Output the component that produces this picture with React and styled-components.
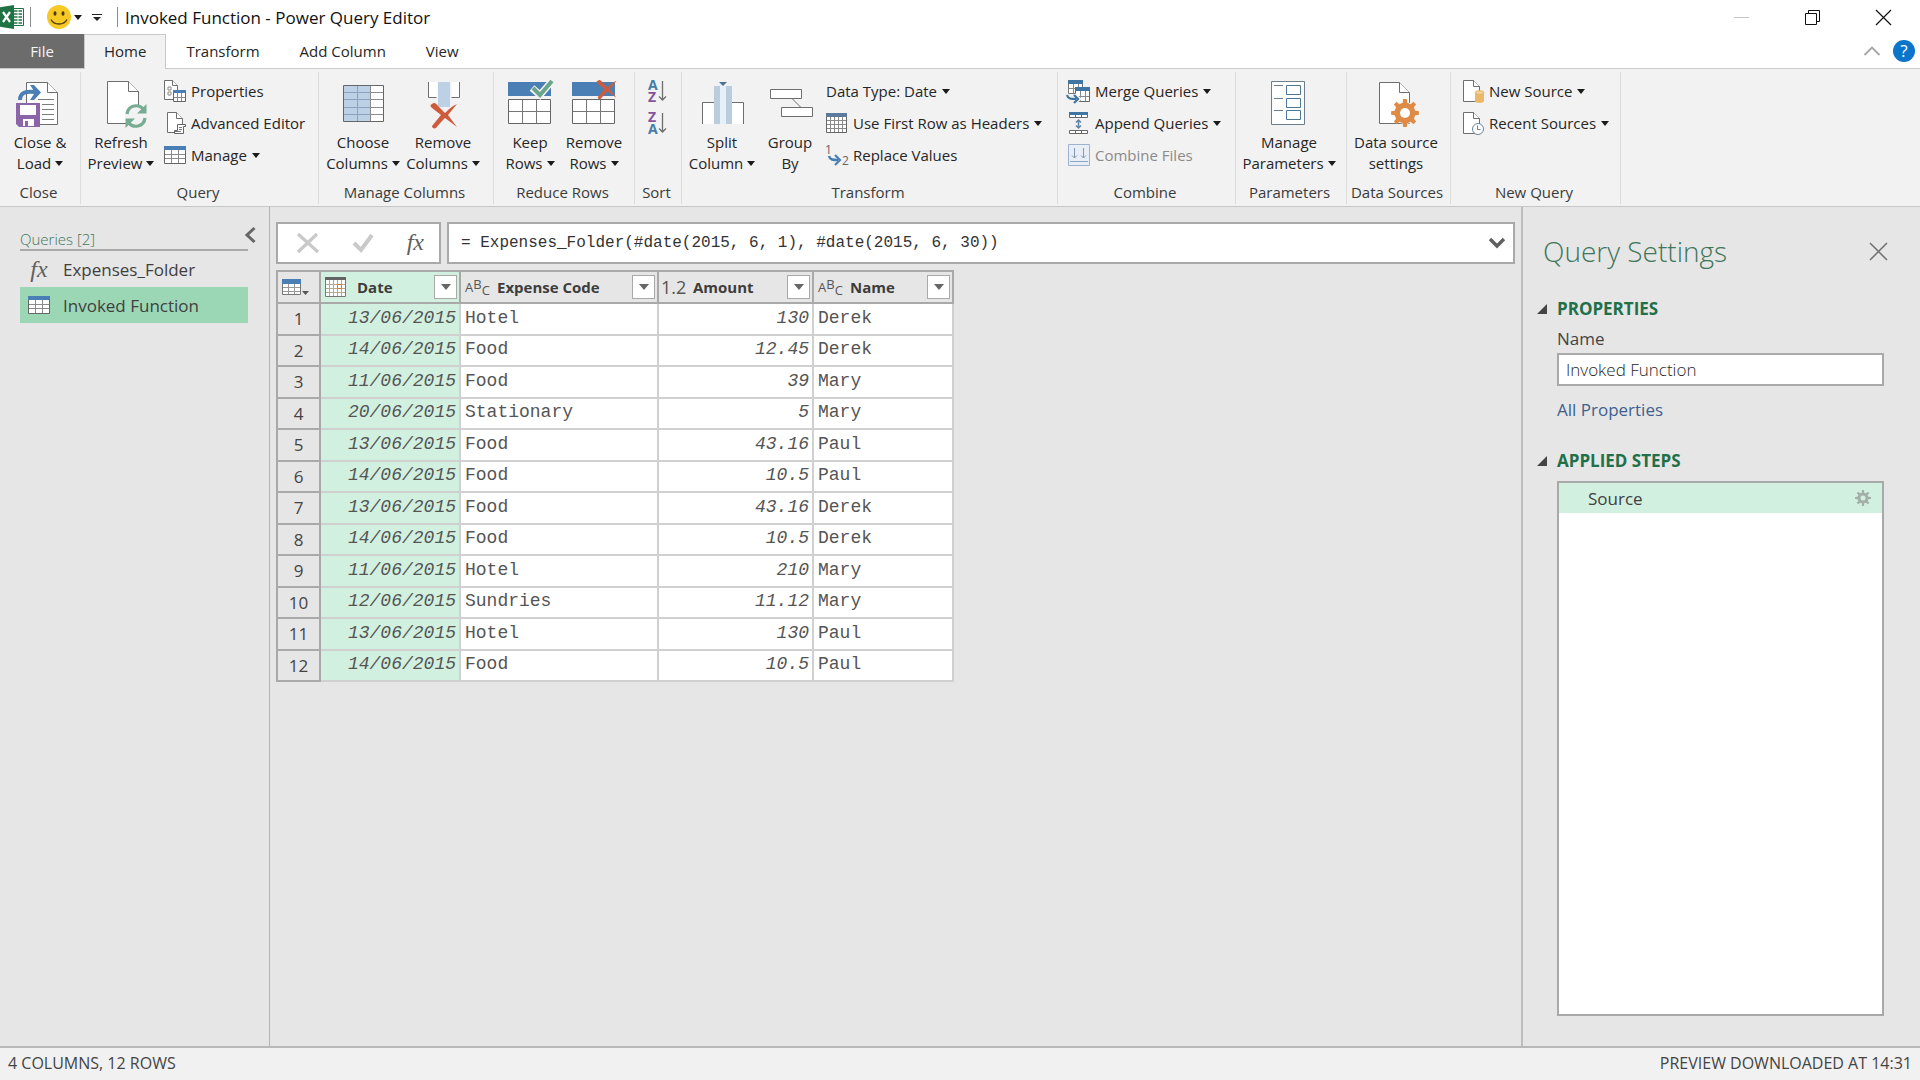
import React, { useState } from 'react';
import styled, { createGlobalStyle, css } from 'styled-components';

const GlobalStyle = createGlobalStyle`
  *,
  *::before,
  *::after {
    box-sizing: border-box;
  }
  body {
    margin: 0;
    background: #e6e6e6;
    color: #262626;
    font-family: 'Open Sans', 'Noto Sans', sans-serif;
    font-size: 15px;
    line-height: 21px;
  }
  button,
  input {
    font: inherit;
    color: inherit;
  }
  button {
    margin: 0;
    padding: 0;
    border: 0;
    background: none;
    cursor: pointer;
  }
  svg {
    display: block;
    flex: none;
    overflow: visible;
  }
`;

const Page = styled.div`
  display: flex;
  flex-direction: column;
  min-height: 100vh;
`;

/* title bar */

const TitleBar = styled.header`
  display: flex;
  align-items: center;
  height: 34px;
  padding: 0 1px 0 0;
  background: #fff;
`;

const Separator = styled.span`
  flex: none;
  width: 1px;
  height: 20px;
  margin-left: ${({ $gap }) => $gap || 0}px;
  background: #8c8c8c;
`;

const QuickAccess = styled.div`
  display: flex;
  align-items: center;
  gap: 10px;
  padding: 0 15px 0 16px;
`;

const QuickButton = styled.button`
  display: flex;
  align-items: center;
  gap: 3px;
`;

const Title = styled.h1`
  flex: 1;
  margin: 0 0 0 7px;
  color: #111;
  font-size: 17px;
  font-weight: 400;
`;

const WindowButton = styled.button`
  display: flex;
  align-items: center;
  justify-content: center;
  width: 71px;
  height: 34px;
`;

/* tabs */

const TabRow = styled.nav`
  display: flex;
  height: 35px;
  background: #fff;
  border-bottom: 1px solid #c9c9c9;
`;

const Tab = styled.button`
  height: 35px;
  padding: 0 19px 2px;
  border: 1px solid transparent;
  border-bottom: 0;

  ${({ $active }) =>
    $active &&
    css`
      background: #f2f2f2;
      border-color: #c9c9c9;
    `}
`;

const FileTab = styled.button`
  width: 84px;
  height: 34px;
  background: #6c6c6c;
  color: #f4f4f4;
`;

const TabTools = styled.div`
  display: flex;
  align-items: center;
  gap: 13px;
  margin-left: auto;
  padding-right: 5px;
`;

const HelpButton = styled.button`
  width: 22px;
  height: 22px;
  border-radius: 50%;
  background: #0b74cb;
  color: #fff;
  font-size: 17px;
  line-height: 22px;
`;

/* ribbon */

const Ribbon = styled.section`
  display: flex;
  padding: 3px 0 2px;
  background: #f2f2f2;
  border-bottom: 1px solid #c6c6c6;
`;

const GroupBox = styled.div`
  display: flex;
  flex-direction: column;
  min-width: ${({ $width }) => $width}px;
  border-right: 1px solid #dcdcdc;
`;

const GroupBody = styled.div`
  display: flex;
  flex: 1;
  padding: 3px 4px 0;
`;

const GroupLabel = styled.div`
  height: 25px;
  padding-right: 3px;
  color: #3b3b3b;
  text-align: center;
  line-height: 27px;
  white-space: nowrap;
`;

const LargeButton = styled.button`
  display: flex;
  flex-direction: column;
  align-items: center;
  width: ${({ $width }) => $width || 72}px;
  height: 104px;
  padding-top: 5px;
  white-space: nowrap;

  svg {
    margin-bottom: 4px;
  }
`;

const Stack = styled.div`
  display: flex;
  flex-direction: column;
  align-items: flex-start;
  padding-left: ${({ $inset }) => $inset || 0}px;
`;

const SmallButton = styled.button`
  display: flex;
  align-items: center;
  gap: 5px;
  height: 32px;
  white-space: nowrap;

  &:disabled {
    color: #8b8b8b;
  }
`;

const Caret = styled.span`
  display: inline-block;
  width: 0;
  height: 0;
  margin-left: ${({ $gap }) => $gap || 0}px;
  border: 4px solid transparent;
  border-top: 5px solid ${({ $color }) => $color || '#1a1a1a'};
  border-bottom: 0;
  vertical-align: 3px;
`;

/* body */

const Main = styled.main`
  display: flex;
  flex: 1;
`;

const QueriesPane = styled.aside`
  flex: 0 0 270px;
  padding: 20px 21px 0 20px;
  border-right: 1px solid #b4b4b4;
`;

const QueriesHead = styled.div`
  display: flex;
  align-items: flex-start;
  justify-content: space-between;
  height: 22px;
  margin-right: -8px;
`;

const QueriesTitle = styled.h2`
  margin: 0;
  color: #3f775b;
  font-size: 15px;
  font-weight: 300;
  line-height: 24px;
`;

const QueryList = styled.ul`
  margin: 0;
  padding: 0;
  border-top: 2px solid #a9a9a9;
  list-style: none;
`;

const QueryItem = styled.button`
  display: flex;
  align-items: center;
  gap: 13px;
  width: 100%;
  height: 36px;
  padding: 0 8px;
  background: ${({ $selected }) => ($selected ? '#9cd7b5' : 'transparent')};
  color: #404040;
  font-size: 17px;
  text-align: left;
`;

const Fx = styled.span`
  width: 22px;
  color: #606060;
  font-family: 'Liberation Serif', serif;
  font-size: 24px;
  font-style: italic;
  text-align: center;
`;

const Workspace = styled.section`
  flex: 1;
  min-width: 0;
  padding: 15px 6px 0;
`;

const FormulaRow = styled.div`
  display: flex;
  gap: 6px;
`;

const FormulaTools = styled.div`
  display: flex;
  align-items: center;
  justify-content: space-between;
  width: 165px;
  height: 42px;
  padding: 0 15px 0 19px;
  background: #fff;
  border: 2px solid #a9a9a9;
`;

const FormulaField = styled.div`
  display: flex;
  flex: 1;
  align-items: center;
  padding: 0 8px 0 12px;
  background: #fff;
  border: 2px solid #a9a9a9;
`;

const FormulaInput = styled.input`
  flex: 1;
  min-width: 0;
  padding: 0;
  border: 0;
  outline: 0;
  color: #333;
  font-family: 'Liberation Mono', monospace;
  font-size: 16px;
`;

const Grid = styled.table`
  margin-top: 6px;
  border-collapse: collapse;
  table-layout: fixed;
  width: 676px;
  background: #fff;
`;

const HeadCell = styled.th`
  height: 32px;
  padding: 0 4px;
  border: 2px solid #a9a9a9;
  background: ${({ $selected }) => ($selected ? '#d2f0e0' : '#e6e6e6')};
  color: #3d3d3d;
  text-align: left;
`;

const HeadInner = styled.div`
  display: flex;
  align-items: center;
  gap: 10px;
`;

const HeadText = styled.span`
  flex: 1;
  font-size: 15px;
  font-weight: 700;
  white-space: nowrap;
`;

const FilterButton = styled.button`
  display: flex;
  align-items: center;
  justify-content: center;
  width: 23px;
  height: 24px;
  margin-right: -2px;
  background: #fff;
  border: 1px solid #a9a9a9;

  ${Caret} {
    border-width: 6px 5px 0;
  }
`;

const TypeMark = styled.span`
  display: flex;
  width: 22px;
  margin-left: ${({ $shift }) => $shift || 0}px;
  font-size: ${({ $size }) => $size || 15}px;
  font-weight: 400;
  color: #555;
`;

const Letter = styled.span`
  font-size: 13px;
  line-height: 16px;
  padding-top: ${({ $drop }) => $drop}px;
`;

const Row = styled.tr`
  height: 31px;

  &:nth-child(odd) {
    height: 32px;
  }
`;

const RowNumber = styled.th`
  padding: 0 0 1px;
  border: 2px solid #a9a9a9;
  background: #e6e6e6;
  color: #444;
  font-size: 17px;
  font-weight: 400;
`;

const Cell = styled.td`
  padding: 0 4px 2px;
  border: 2px solid #d0d0d0;
  background: ${({ $selected }) => ($selected ? '#d2f0e0' : '#fff')};
  color: #555;
  font-family: 'Liberation Mono', monospace;
  font-size: 18px;
  white-space: nowrap;

  ${({ $value }) =>
    $value &&
    css`
      padding-right: 3px;
      font-style: italic;
      text-align: right;
    `}
`;

const Settings = styled.aside`
  display: flex;
  flex-direction: column;
  flex: 0 0 399px;
  padding: 24px 36px 30px 14px;
  border-left: 2px solid #bdbdbd;
`;

const SettingsHead = styled.div`
  display: flex;
  align-items: center;
  justify-content: space-between;
  height: 40px;
  padding: 0 0 0 6px;
  margin-right: -3px;
`;

const SettingsTitle = styled.h2`
  margin: 0;
  color: #3f775b;
  font-size: 28px;
  font-weight: 300;
  line-height: 40px;
`;

const SectionTitle = styled.h3`
  display: flex;
  align-items: center;
  gap: 10px;
  margin: ${({ $top }) => $top}px 0 0;
  color: #21704a;
  font-size: 17px;
  font-weight: 700;
  line-height: 24px;
`;

const SectionBody = styled.div`
  display: flex;
  flex-direction: column;
  flex: ${({ $grow }) => ($grow ? 1 : 'none')};
  align-items: stretch;
  margin-left: 20px;
`;

const FieldLabel = styled.label`
  margin-top: 6px;
  color: #444;
  font-size: 17px;
  line-height: 24px;
`;

const NameInput = styled.input`
  height: 33px;
  margin-top: 2px;
  padding: 0 7px;
  border: 2px solid #a9a9a9;
  border-radius: 0;
  background: #fff;
  outline: 0;
  font-weight: 300;
  font-size: 17px;
`;

const PropertiesLink = styled.a`
  align-self: flex-start;
  margin-top: 12px;
  color: #40608e;
  font-size: 17px;
  line-height: 24px;
  text-decoration: none;
`;

const StepList = styled.ul`
  flex: 1;
  margin: 8px 0 0;
  padding: 0;
  background: #fff;
  border: 2px solid #a9a9a9;
  list-style: none;
`;

const Step = styled.button`
  display: flex;
  align-items: center;
  justify-content: space-between;
  width: 100%;
  height: 30px;
  padding: 0 11px 0 29px;
  background: #d2f0e0;
  color: #404040;
  font-size: 17px;
`;

const StatusBar = styled.footer`
  display: flex;
  align-items: center;
  justify-content: space-between;
  height: 34px;
  padding: 0 8px 2px;
  background: #f1f1f1;
  border-top: 2px solid #b8b8b8;
  color: #444;
  font-size: 16px;
`;

/* icons */

const Svg = ({ w = 48, h = 48, children }) => (
  <svg width={w} height={h} viewBox={`0 0 ${w} ${h}`} fill="none" aria-hidden="true">
    {children}
  </svg>
);

const SheetIcon = ({ x = 0, y = 0, w = 31, h = 42, fold = 10 }) => (
  <g stroke="#6e6e6e" fill="#fff">
    <path d={`M${x} ${y}h${w - fold}l${fold} ${fold}v${h - fold}h${-w}z`} />
    <path d={`M${x + w - fold} ${y}v${fold}h${fold}`} />
  </g>
);

const gearPath = (cx, cy, r, inner, teeth) => {
  const step = (Math.PI * 2) / teeth;
  const point = (radius, angle) =>
    `${(cx + radius * Math.cos(angle)).toFixed(2)} ${(cy + radius * Math.sin(angle)).toFixed(2)}`;
  const parts = [];
  for (let i = 0; i < teeth; i += 1) {
    const a = i * step;
    parts.push(
      point(inner, a - step * 0.28),
      point(r, a - step * 0.17),
      point(r, a + step * 0.17),
      point(inner, a + step * 0.28)
    );
  }
  return `M${parts.join('L')}z`;
};

const ExcelIcon = () => (
  <Svg w={24} h={24}>
    <path d="M12 3.500h11.500v17H12z" fill="#fff" stroke="#217346" />
    <path d="M14 6h8M14 9h8M14 12h8M14 15h8M14 18h8" stroke="#217346" strokeWidth="1.500" />
    <path d="M18 4v16" stroke="#fff" />
    <path d="M-2 2.500L14 0v24L-2 21.500z" fill="#1f7244" />
    <path d="M3 7l7 10M10 7L3 17" stroke="#fff" strokeWidth="2.200" />
  </Svg>
);

const SmileyIcon = () => (
  <Svg w={24} h={24}>
    <circle cx="12" cy="12" r="12" fill="#f7c925" />
    <ellipse cx="8" cy="8.500" rx="1.500" ry="2.300" fill="#4a3a10" />
    <ellipse cx="16" cy="8.500" rx="1.500" ry="2.300" fill="#4a3a10" />
    <path d="M4 14.500c3 6 13 6 16 0" stroke="#4a3a10" strokeWidth="1.300" />
  </Svg>
);

const CloseLoadIcon = () => (
  <Svg>
    <SheetIcon x={10.5} y={2.5} />
    <path d="M22 19.500h16M26 24.500h12M26 29.500h12M26 34.500h12M26 39.500h12" stroke="#7a7a7a" />
    <path d="M4 20c0-8 7-9 15-8" stroke="#4a7fb5" strokeWidth="4" />
    <path d="M14 5h4l7 7.500-7 7.500h-4l5-7.500z" fill="#4a7fb5" />
    <path d="M0 23h24v24H3l-3-3z" fill="#8c64a8" />
    <path d="M4 25h16v10H4zM7 39h11v7H7z" fill="#fff" />
    <path d="M9 41h3v5H9z" fill="#8c64a8" />
  </Svg>
);

const RefreshIcon = () => (
  <Svg>
    <SheetIcon x={10.5} y={1.5} />
    <circle cx="39" cy="36" r="11" fill="#f2f2f2" />
    <path d="M30 34c1-9 12-11 17-4M48 38c-1 9-12 11-17 4" stroke="#76ac92" strokeWidth="3.200" />
    <path d="M49.500 24v9.500H40zM28.500 48v-9.500H38z" fill="#76ac92" />
  </Svg>
);

const ChooseIcon = () => (
  <Svg>
    <path d="M4.500 5.500h40v36h-40z" fill="#fff" />
    <path d="M4.500 5.500h27v36h-27z" fill="#bcd0e6" />
    <path d="M5 12.500h26M5 19.500h26M5 27.500h26M5 34.500h26M18.500 6v35" stroke="#8aa2bd" />
    <path d="M31 12.500h13M31 19.500h13M31 27.500h13M31 34.500h13M31.500 6v35" stroke="#8c8c8c" />
    <path d="M4.500 5.500h40v36h-40z" stroke="#666" />
  </Svg>
);

const CrossShape = ({ x = 0, y = 0, s = 1 }) => (
  <path
    transform={`translate(${x} ${y}) scale(${s})`}
    d="M1 1c2-2 4-1 6 2l7 7c4-4 7-7 12-9-3 4-6 7-9 11l9 12-12-9c-3 3-6 6-9 10-2 1-4 0-4-2l9-11-9-7c-2-2-2-3 0-4z"
    fill="#cf5b3d"
  />
);

const RemoveColumnIcon = () => (
  <Svg>
    <path d="M9.500 2v15.500h9V2zM32.500 2v15.500h8V2z" fill="#fff" />
    <path d="M9.500 2v15.500h8M40.500 2v15.500h-8" stroke="#6e6e6e" />
    <path d="M19 2h12v25H19z" fill="#bcd0e6" />
    <CrossShape x={12} y={23} />
  </Svg>
);

const RowsIcon = ({ remove }) => (
  <Svg>
    <path d="M2 2h43v14H2z" fill="#4a7fb5" />
    <path d="M2.500 19.500h42v24h-42z" fill="#fff" stroke="#666" />
    <path d="M3 31.500h41M16.500 20v23M30.500 20v23" stroke="#777" />
    {remove ? (
      <CrossShape x={27} y={0} s={0.75} />
    ) : (
      <g>
        <path d="M26 8l8 7L46 1" stroke="#f2f2f2" strokeWidth="7" />
        <path d="M27 8l7 7L46 1" stroke="#6aa58b" strokeWidth="4" />
      </g>
    )}
  </Svg>
);

const AZ = styled.text`
  font: 700 14px 'Open Sans', sans-serif;
`;

const SortIcon = ({ reverse }) => (
  <Svg w={22} h={24}>
    <AZ x="0" y="11" fill={reverse ? '#84559c' : '#477ba8'}>
      {reverse ? 'Z' : 'A'}
    </AZ>
    <AZ x="0" y="23" fill={reverse ? '#477ba8' : '#84559c'}>
      {reverse ? 'A' : 'Z'}
    </AZ>
    <path d="M14.500 2v19M11 17.500l3.500 3.500 3.500-3.500" stroke="#6e6e6e" strokeWidth="1.300" />
  </Svg>
);

const SplitIcon = () => (
  <Svg>
    <path d="M4.500 44V22.500h41V44z" fill="#fff" />
    <path d="M4.500 44V22.500h12M45.500 44V22.500h-12" stroke="#6e6e6e" />
    <path d="M22 5h6v39h-6z" fill="#e7f0f8" />
    <path d="M16 6h6v38h-6zM28 6h6v38h-6z" fill="#b9cddf" />
    <path d="M21 2h8l-4 4z" fill="#4a7394" />
  </Svg>
);

const GroupIcon = () => (
  <Svg>
    <path d="M26 18.500l9 9" stroke="#6e6e6e" />
    <path d="M4.500 9.500h31v9h-31zM15.500 27.500h31v9h-31z" fill="#fff" stroke="#6e6e6e" />
  </Svg>
);

const ParametersIcon = () => (
  <Svg>
    <path d="M6.500 1.500h33v43h-33z" fill="#fff" stroke="#6e7e8c" />
    <path d="M9 5.500h9M9 18.500h9M9 30.500h9" stroke="#6e7e8c" />
    <path d="M21.500 5.500h14v9h-14zM21.500 18.500h14v9h-14zM21.500 30.500h14v9h-14z" stroke="#4d7796" />
  </Svg>
);

const SourceSettingsIcon = () => (
  <Svg>
    <SheetIcon x={7.5} y={2.5} w={30} h={41} />
    <circle cx="33" cy="33" r="11" fill="#f2f2f2" />
    <path d={gearPath(33, 33, 14, 10.5, 8)} fill="#e08b45" />
    <circle cx="33" cy="33" r="5" fill="#fff" />
  </Svg>
);

const TableIcon = () => (
  <Svg w={22} h={20}>
    <path d="M.500 1.500h21v17H.500z" fill="#fff" stroke="#666" />
    <path d="M7.500 5v13M14.500 5v13M1 9.500h20M1 13.500h20" stroke="#8a8a8a" />
    <path d="M0 1h22v4H0z" fill="#4a7fb5" />
  </Svg>
);

const PropertiesIcon = () => (
  <Svg w={22} h={22}>
    <SheetIcon x={0.5} y={0.5} w={13} h={19} fold={5} />
    <path d="M4 7h3v3H4zM4 12h3v3H4z" stroke="#888" />
    <path d="M9.500 10.500h12v11h-12z" fill="#fff" stroke="#666" />
    <path d="M13.500 13v8M17.500 13v8M10 17.500h11" stroke="#888" />
    <path d="M9 10h13v3H9z" fill="#4a7fb5" />
  </Svg>
);

const EditorIcon = () => (
  <Svg w={22} h={22}>
    <SheetIcon x={3.5} y={0.5} w={15} h={20} fold={6} />
    <path d="M13.500 12.500h8v2h-2v7h-9v-3h3z" fill="#fff" stroke="#666" />
    <path d="M15 15.500h3M15 17.500h3M11 19.500h6" stroke="#777" />
  </Svg>
);

const HeadersIcon = () => (
  <Svg w={22} h={22}>
    <path d="M.500 1.500h20v19H.500z" fill="#fff" stroke="#666" />
    <path d="M4.500 5v15M8.500 5v15M12.500 5v15M16.500 5v15M1 8.500h19M1 12.500h19M1 16.500h19" stroke="#8a8a8a" />
    <path d="M0 1h21v4H0z" fill="#5d7a9c" />
  </Svg>
);

const Digit = styled.text`
  font: 400 12px 'Open Sans', sans-serif;
  fill: #666;
`;

const ReplaceIcon = () => (
  <Svg w={22} h={22}>
    <Digit x="-1" y="10">1</Digit>
    <Digit x="16" y="21">2</Digit>
    <path d="M3 12c1 4 4 4 9 4" stroke="#4a7fb5" strokeWidth="2.500" />
    <path d="M9 11l5 5-5 5" stroke="#4a7fb5" strokeWidth="2.200" />
  </Svg>
);

const MergeIcon = () => (
  <Svg w={22} h={22}>
    <path d="M.500 1.500h14v12H.500z" fill="#fff" stroke="#777" />
    <path d="M5.500 4v9M10.500 4v9M1 8.500h13" stroke="#888" />
    <path d="M0 0h15v4H0z" fill="#3f75a3" />
    <path d="M7.500 8.500h14v13h-14z" fill="#fff" stroke="#666" />
    <path d="M12.500 11v10M17.500 11v10M8 16.500h13" stroke="#888" />
    <path d="M7 7h15v4H7z" fill="#3f75a3" />
    <path d="M-1 15c1 5 4 5 9 5M6 15l5 4-5 4" stroke="#f2f2f2" strokeWidth="4" />
    <path d="M-1 15c1 4 4 4 9 4M6 15l4 4-4 4" stroke="#3f75a3" strokeWidth="2.200" />
  </Svg>
);

const AppendIcon = () => (
  <Svg w={22} h={22}>
    <path d="M1.500 1.500h18v4h-18zM1.500 18.500h18v3h-18z" fill="#fff" stroke="#666" />
    <path d="M1 0h19v3H1z" fill="#3f75a3" />
    <path d="M7.500 3v3M13.500 3v3M7.500 18v4M13.500 18v4" stroke="#666" />
    <path d="M10.500 8v8M8 10.500L10.500 8l2.500 2.500M8 13.500l2.500 2.500 2.500-2.500" stroke="#5f86a8" strokeWidth="1.500" />
  </Svg>
);

const CombineFilesIcon = () => (
  <Svg w={22} h={22}>
    <path d="M.500.500h21v21H.500z" fill="#e9eef6" stroke="#9db1d0" />
    <path d="M2 17.500h18" stroke="#8fa5c7" />
    <path d="M6.500 4v10M4 11.500L6.500 14 9 11.500M15.500 4v10M13 11.500l2.500 2.500 2.500-2.500" stroke="#8196b5" />
  </Svg>
);

const NewSourceIcon = () => (
  <Svg w={22} h={22}>
    <SheetIcon x={1.5} y={0.5} w={16} h={21} fold={6} />
    <path d="M13 12v9c0 2.500 9 2.500 9 0v-9z" fill="#ecb767" />
    <ellipse cx="17.500" cy="12.500" rx="4.500" ry="2" fill="#f3cf95" stroke="#dfa651" strokeWidth=".6" />
  </Svg>
);

const RecentIcon = () => (
  <Svg w={22} h={22}>
    <SheetIcon x={1.5} y={0.5} w={16} h={21} fold={6} />
    <circle cx="16" cy="17" r="5.500" fill="#fff" stroke="#68849a" />
    <path d="M15.500 13.500v4h3" stroke="#68849a" />
  </Svg>
);

const CalendarIcon = () => (
  <Svg w={21} h={21}>
    <path d="M.500.500h20v19H.500z" fill="#fff" stroke="#777" />
    <path d="M4.500 3v16M8.500 3v16M12.500 3v16M16.500 3v16M1 7.500h19M1 11.500h19M1 15.500h19" stroke="#b5a994" />
    <path d="M0 0h21v3H0z" fill="#636363" />
    <path d="M12.500 7.500h4v4h-4z" stroke="#d27d2c" />
  </Svg>
);

const SmallTableIcon = () => (
  <Svg w={19} h={17}>
    <path d="M.500.500h18v15H.500z" fill="#fff" stroke="#777" />
    <path d="M6.500 4v11M12.500 4v11M1 8.500h17M1 12.500h17" stroke="#999" />
    <path d="M0 0h19v5H0z" fill="#4a7fb5" />
  </Svg>
);

const TableMenuIcon = () => (
  <Svg w={28} h={17}>
    <SmallTableIcon />
    <path d="M20 12h7l-3.500 4z" fill="#555" />
  </Svg>
);

const SectionArrow = () => (
  <Svg w={10} h={10}>
    <path d="M10 0v10H0z" fill="#444" />
  </Svg>
);

const TextMark = () => (
  <TypeMark>
    <Letter $drop={3}>A</Letter>
    <Letter $drop={0}>B</Letter>
    <Letter $drop={6}>C</Letter>
  </TypeMark>
);

/* data */

const rows = [
  ['13/06/2015', 'Hotel', '130', 'Derek'],
  ['14/06/2015', 'Food', '12.45', 'Derek'],
  ['11/06/2015', 'Food', '39', 'Mary'],
  ['20/06/2015', 'Stationary', '5', 'Mary'],
  ['13/06/2015', 'Food', '43.16', 'Paul'],
  ['14/06/2015', 'Food', '10.5', 'Paul'],
  ['13/06/2015', 'Food', '43.16', 'Derek'],
  ['14/06/2015', 'Food', '10.5', 'Derek'],
  ['11/06/2015', 'Hotel', '210', 'Mary'],
  ['12/06/2015', 'Sundries', '11.12', 'Mary'],
  ['13/06/2015', 'Hotel', '130', 'Paul'],
  ['14/06/2015', 'Food', '10.5', 'Paul'],
];

const columns = [
  { name: 'Date', mark: <TypeMark><CalendarIcon /></TypeMark> },
  { name: 'Expense Code', mark: <TextMark /> },
  { name: 'Amount', mark: <TypeMark $size={18} $shift={-2}>1.2</TypeMark> },
  { name: 'Name', mark: <TextMark /> },
];

const Group = ({ label, width, children }) => (
  <GroupBox $width={width}>
    <GroupBody>{children}</GroupBody>
    <GroupLabel>{label}</GroupLabel>
  </GroupBox>
);

const Large = ({ icon, lines, menu, width }) => (
  <LargeButton type="button" $width={width}>
    {icon}
    <span>{lines[0]}</span>
    <span>
      {lines[1]}
      {menu && <Caret $gap={4} />}
    </span>
  </LargeButton>
);

const Small = ({ icon, label, menu, disabled }) => (
  <SmallButton type="button" disabled={disabled}>
    {icon}
    <span>
      {label}
      {menu && <Caret $gap={5} />}
    </span>
  </SmallButton>
);

const App = () => {
  const [formula, setFormula] = useState(
    '= Expenses_Folder(#date(2015, 6, 1), #date(2015, 6, 30))'
  );
  const [name, setName] = useState('Invoked Function');

  return (
    <Page>
      <GlobalStyle />
      <TitleBar>
        <ExcelIcon />
        <Separator $gap={6} />
        <QuickAccess>
          <QuickButton type="button" aria-label="Feedback">
            <SmileyIcon />
            <Caret />
          </QuickButton>
          <QuickButton type="button" aria-label="Customize toolbar">
            <Svg w={10} h={10}>
              <path d="M0 2.500h10" stroke="#222" />
              <path d="M1 5h8L5 9z" fill="#222" />
            </Svg>
          </QuickButton>
        </QuickAccess>
        <Separator />
        <Title>Invoked Function - Power Query Editor</Title>
        <WindowButton type="button" aria-label="Minimize">
          <Svg w={15} h={15}>
            <path d="M0 7.500h15" stroke="#c4c4c4" />
          </Svg>
        </WindowButton>
        <WindowButton type="button" aria-label="Restore">
          <Svg w={15} h={15}>
            <path d="M.500 3.500h11v11H.500zM3.500 3V.500h11v11H12" stroke="#111" />
          </Svg>
        </WindowButton>
        <WindowButton type="button" aria-label="Close">
          <Svg w={15} h={15}>
            <path d="M0 0l15 15M15 0L0 15" stroke="#111" strokeWidth="1.200" />
          </Svg>
        </WindowButton>
      </TitleBar>

      <TabRow>
        <FileTab type="button">File</FileTab>
        <Tab type="button" $active>Home</Tab>
        <Tab type="button">Transform</Tab>
        <Tab type="button">Add Column</Tab>
        <Tab type="button">View</Tab>
        <TabTools>
          <button type="button" aria-label="Collapse ribbon">
            <Svg w={16} h={10}>
              <path d="M.500 9L8 1.500 15.500 9" stroke="#a6a6a6" strokeWidth="1.800" />
            </Svg>
          </button>
          <HelpButton type="button">?</HelpButton>
        </TabTools>
      </TabRow>

      <Ribbon>
        <Group label="Close" width={81}>
          <Large icon={<CloseLoadIcon />} lines={['Close &', 'Load']} menu />
        </Group>
        <Group label="Query" width={238}>
          <Large icon={<RefreshIcon />} lines={['Refresh', 'Preview']} menu />
          <Stack $inset={7}>
            <Small icon={<PropertiesIcon />} label="Properties" />
            <Small icon={<EditorIcon />} label="Advanced Editor" />
            <Small icon={<TableIcon />} label="Manage" menu />
          </Stack>
        </Group>
        <Group label="Manage Columns" width={175}>
          <Large icon={<ChooseIcon />} lines={['Choose', 'Columns']} width={80} menu />
          <Large icon={<RemoveColumnIcon />} lines={['Remove', 'Columns']} width={80} menu />
        </Group>
        <Group label="Reduce Rows" width={141}>
          <Large icon={<RowsIcon />} lines={['Keep', 'Rows']} width={64} menu />
          <Large icon={<RowsIcon remove />} lines={['Remove', 'Rows']} width={64} menu />
        </Group>
        <Group label="Sort" width={47}>
          <Stack $inset={9}>
            <SmallButton type="button" aria-label="Sort ascending">
              <SortIcon />
            </SmallButton>
            <SmallButton type="button" aria-label="Sort descending">
              <SortIcon reverse />
            </SmallButton>
          </Stack>
        </Group>
        <Group label="Transform" width={376}>
          <Large icon={<SplitIcon />} lines={['Split', 'Column']} menu />
          <Large icon={<GroupIcon />} lines={['Group', 'By']} width={64} />
          <Stack $inset={4}>
            <Small label="Data Type: Date" menu />
            <Small icon={<HeadersIcon />} label="Use First Row as Headers" menu />
            <Small icon={<ReplaceIcon />} label="Replace Values" />
          </Stack>
        </Group>
        <Group label="Combine" width={178}>
          <Stack $inset={6}>
            <Small icon={<MergeIcon />} label="Merge Queries" menu />
            <Small icon={<AppendIcon />} label="Append Queries" menu />
            <Small icon={<CombineFilesIcon />} label="Combine Files" disabled />
          </Stack>
        </Group>
        <Group label="Parameters" width={111}>
          <Large icon={<ParametersIcon />} lines={['Manage', 'Parameters']} width={98} menu />
        </Group>
        <Group label="Data Sources" width={104}>
          <Large icon={<SourceSettingsIcon />} lines={['Data source', 'settings']} width={90} />
        </Group>
        <Group label="New Query" width={170}>
          <Stack $inset={7}>
            <Small icon={<NewSourceIcon />} label="New Source" menu />
            <Small icon={<RecentIcon />} label="Recent Sources" menu />
          </Stack>
        </Group>
      </Ribbon>

      <Main>
        <QueriesPane>
          <QueriesHead>
            <QueriesTitle>Queries [2]</QueriesTitle>
            <button type="button" aria-label="Collapse queries">
              <Svg w={12} h={16}>
                <path d="M10.500 1L3 8l7.500 7" stroke="#666" strokeWidth="3" />
              </Svg>
            </button>
          </QueriesHead>
          <QueryList>
            <li>
              <QueryItem type="button">
                <Fx>fx</Fx>
                Expenses_Folder
              </QueryItem>
            </li>
            <li>
              <QueryItem type="button" $selected>
                <TableIcon />
                Invoked Function
              </QueryItem>
            </li>
          </QueryList>
        </QueriesPane>

        <Workspace>
          <FormulaRow>
            <FormulaTools>
              <button type="button" aria-label="Cancel">
                <Svg w={22} h={20}>
                  <path d="M1 1l20 18M20 1L1 19" stroke="#c9c9c9" strokeWidth="3.200" />
                </Svg>
              </button>
              <button type="button" aria-label="Commit">
                <Svg w={20} h={18}>
                  <path d="M1 9l7 7L19 1" stroke="#c9c9c9" strokeWidth="4" />
                </Svg>
              </button>
              <button type="button" aria-label="Add step">
                <Fx>fx</Fx>
              </button>
            </FormulaTools>
            <FormulaField>
              <FormulaInput
                aria-label="Formula"
                value={formula}
                onChange={(e) => setFormula(e.target.value)}
              />
              <button type="button" aria-label="Expand formula bar">
                <Svg w={16} h={12}>
                  <path d="M1 2l7 7 7-7" stroke="#606060" strokeWidth="3.400" />
                </Svg>
              </button>
            </FormulaField>
          </FormulaRow>

          <Grid>
            <colgroup>
              <col width="43" />
              <col width="140" />
              <col width="198" />
              <col width="155" />
              <col width="140" />
            </colgroup>
            <thead>
              <tr>
                <HeadCell>
                  <QuickButton type="button" aria-label="Table menu">
                    <TableMenuIcon />
                  </QuickButton>
                </HeadCell>
                {columns.map((column, i) => (
                  <HeadCell key={column.name} $selected={i === 0}>
                    <HeadInner>
                      {column.mark}
                      <HeadText>{column.name}</HeadText>
                      <FilterButton type="button" aria-label={`Filter ${column.name}`}>
                        <Caret $color="#666" />
                      </FilterButton>
                    </HeadInner>
                  </HeadCell>
                ))}
              </tr>
            </thead>
            <tbody>
              {rows.map(([date, code, amount, person], i) => (
                <Row key={i}>
                  <RowNumber>{i + 1}</RowNumber>
                  <Cell $selected $value>{date}</Cell>
                  <Cell>{code}</Cell>
                  <Cell $value>{amount}</Cell>
                  <Cell>{person}</Cell>
                </Row>
              ))}
            </tbody>
          </Grid>
        </Workspace>

        <Settings>
          <SettingsHead>
            <SettingsTitle>Query Settings</SettingsTitle>
            <button type="button" aria-label="Close settings">
              <Svg w={17} h={17}>
                <path d="M0 0l17 17M17 0L0 17" stroke="#707070" strokeWidth="1.500" />
              </Svg>
            </button>
          </SettingsHead>
          <SectionTitle $top={26}>
            <SectionArrow />
            PROPERTIES
          </SectionTitle>
          <SectionBody>
            <FieldLabel htmlFor="query-name">Name</FieldLabel>
            <NameInput id="query-name" value={name} onChange={(e) => setName(e.target.value)} />
            <PropertiesLink href="#properties">All Properties</PropertiesLink>
          </SectionBody>
          <SectionTitle $top={27}>
            <SectionArrow />
            APPLIED STEPS
          </SectionTitle>
          <SectionBody $grow>
            <StepList>
              <li>
                <Step type="button">
                  Source
                  <Svg w={16} h={16}>
                    <path d={gearPath(8, 8, 8, 5.5, 8)} fill="#a3b0a9" />
                    <circle cx="8" cy="8" r="2.500" fill="#d2f0e0" />
                  </Svg>
                </Step>
              </li>
            </StepList>
          </SectionBody>
        </Settings>
      </Main>

      <StatusBar>
        <span>4 COLUMNS, 12 ROWS</span>
        <span>PREVIEW DOWNLOADED AT 14:31</span>
      </StatusBar>
    </Page>
  );
};

export default App;
